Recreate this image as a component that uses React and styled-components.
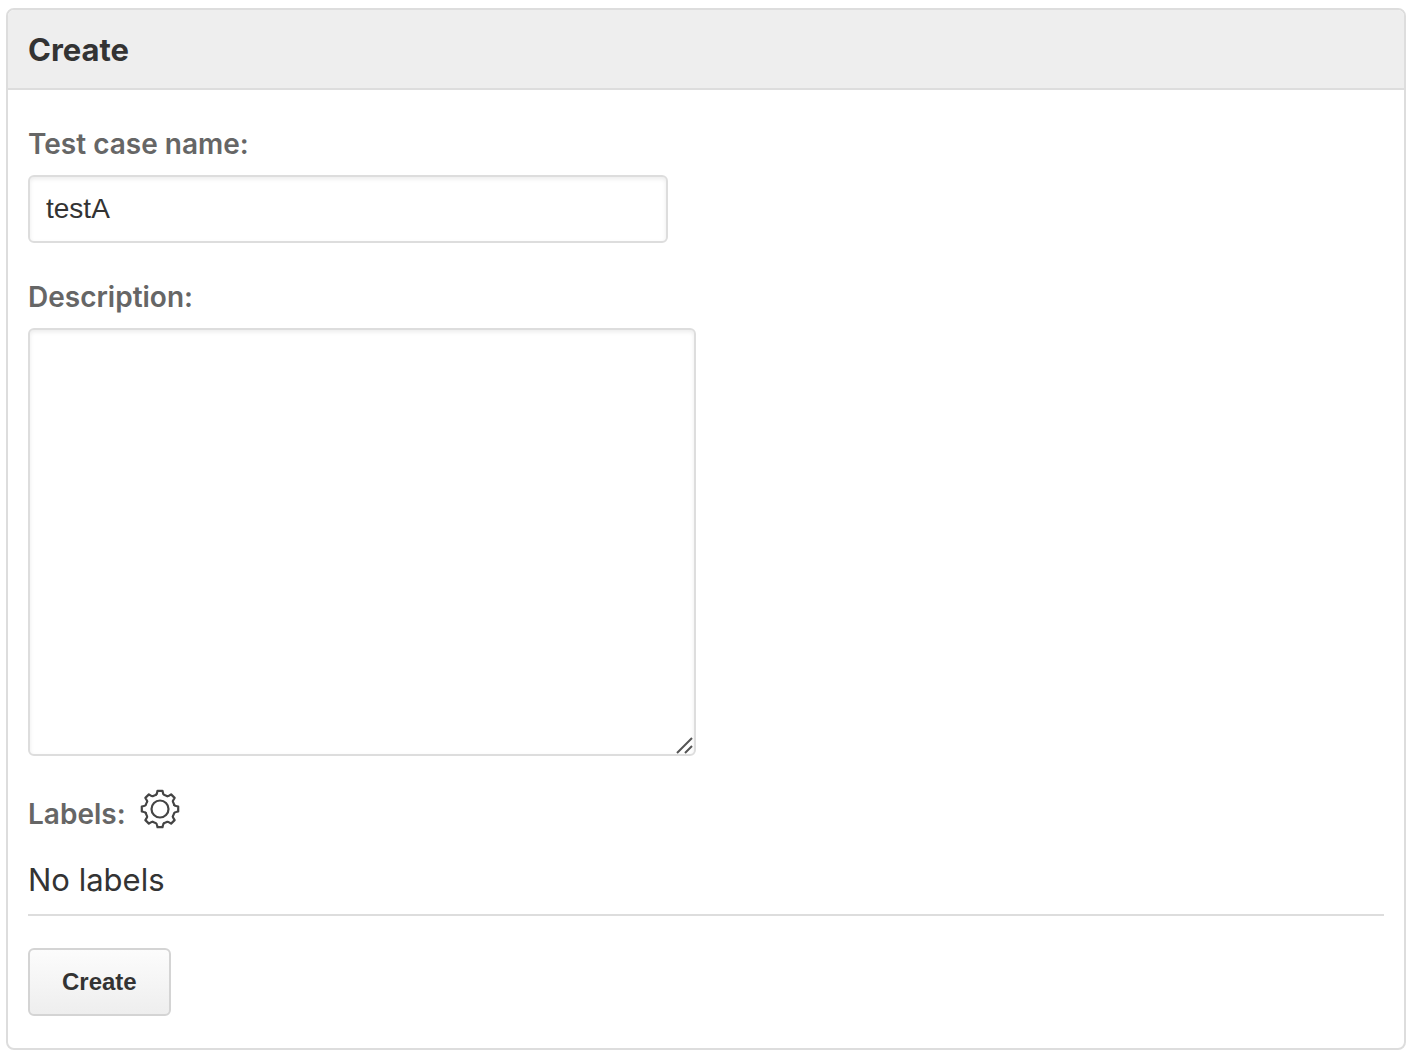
import { useState } from 'react';
import styled, { createGlobalStyle } from 'styled-components';

const GlobalStyle = createGlobalStyle`
  body {
    margin: 0;
    background: #fff;
    color: #333;
    font-family: Inter, 'Liberation Sans', sans-serif;
  }

  *, *::before, *::after {
    box-sizing: border-box;
  }
`;

const Page = styled.main`
  padding: 8px 8px 8px 6px;
`;

const Panel = styled.section`
  border: 2px solid #ddd;
  border-radius: 8px;
  overflow: hidden;
`;

const PanelHeading = styled.header`
  padding: 20px 20px 18px;
  background: #eee;
  border-bottom: 2px solid #ddd;
`;

const PanelTitle = styled.h1`
  margin: 0;
  font-size: 31px;
  font-weight: 700;
  line-height: 40px;
`;

const Form = styled.form`
  padding: 34px 20px 32px;
`;

const Field = styled.div`
  display: flex;
  flex-direction: column;
  align-items: flex-start;
  gap: 11px;
  margin-bottom: 34px;
`;

const Label = styled.label`
  color: #666;
  font-size: 28px;
  font-weight: 600;
  line-height: 40px;
`;

const TextInput = styled.input`
  width: 640px;
  max-width: 100%;
  height: 68px;
  padding: 0 16px;
  border: 2px solid #ddd;
  border-radius: 6px;
  box-shadow: inset 0 2px 4px rgba(0, 0, 0, 0.08);
  background: #fff;
  color: #333;
  font-family: 'Liberation Sans', Arial, sans-serif;
  font-size: 28px;
  outline: none;
`;

const TextAreaWrapper = styled.div`
  position: relative;
  display: flex;
  max-width: 100%;
`;

const TextArea = styled(TextInput)`
  width: 668px;
  height: 428px;
  padding: 12px 16px;
  resize: both;

  &::-webkit-resizer {
    background: transparent;
  }
`;

const ResizeGrip = styled.svg`
  position: absolute;
  right: 2px;
  bottom: 2px;
  pointer-events: none;
`;

const LabelsHeader = styled.div`
  display: flex;
  align-items: center;
  gap: 15px;
`;

const LabelsTitle = styled.span`
  color: #666;
  font-size: 28px;
  font-weight: 600;
  line-height: 40px;
`;

const GearButton = styled.button`
  display: flex;
  padding: 0;
  margin-bottom: 10px;
  border: 0;
  background: none;
  color: #444;
  cursor: pointer;
`;

const LabelList = styled.p`
  margin: 0;
  padding: 22px 0 14px;
  border-bottom: 2px solid #ddd;
  font-size: 31px;
  line-height: 40px;
`;

const SubmitButton = styled.button`
  height: 68px;
  margin-top: 32px;
  padding: 0 32px;
  border: 2px solid #d4d4d4;
  border-radius: 6px;
  background: linear-gradient(#fcfcfc, #eee);
  color: #333;
  font-family: 'Liberation Sans', Arial, sans-serif;
  font-size: 24px;
  font-weight: 700;
  cursor: pointer;
`;

// one tooth pointing up and the notch to its right, repeated every 45 degrees
const TOOTH = 'M-3.9-14.3Q-3.2-14.8-3-16L-2.5-18.2H2.5L3-16Q3.2-14.8 3.9-14.3Q5.8-13.6 7.35-12.87';
const ANGLES = [0, 45, 90, 135, 180, 225, 270, 315];

const GearIcon = () => (
  <svg width="38" height="38" viewBox="-19 -19 38 38" fill="none" stroke="currentColor" strokeWidth="2.2" strokeLinejoin="round" strokeLinecap="round" overflow="visible" aria-hidden="true">
    {ANGLES.map((angle) => (
      <path key={angle} d={TOOTH} transform={`rotate(${angle})`} />
    ))}
    <circle r="8.5" />
  </svg>
);

const App = () => {
  const [name, setName] = useState('testA');
  const [description, setDescription] = useState('');

  return (
    <Page>
      <GlobalStyle />
      <Panel>
        <PanelHeading>
          <PanelTitle>Create</PanelTitle>
        </PanelHeading>
        <Form onSubmit={(e) => e.preventDefault()}>
          <Field>
            <Label htmlFor="name">Test case name:</Label>
            <TextInput
              id="name"
              type="text"
              value={name}
              onChange={(e) => setName(e.target.value)}
            />
          </Field>
          <Field>
            <Label htmlFor="description">Description:</Label>
            <TextAreaWrapper>
              <TextArea
                as="textarea"
                id="description"
                value={description}
                onChange={(e) => setDescription(e.target.value)}
              />
              <ResizeGrip width="18" height="18" stroke="#555" strokeWidth="2" aria-hidden="true">
                <path d="M1 17L16 2M9 17L16 10" />
              </ResizeGrip>
            </TextAreaWrapper>
          </Field>
          <LabelsHeader>
            <LabelsTitle>Labels:</LabelsTitle>
            <GearButton type="button" aria-label="Edit labels">
              <GearIcon />
            </GearButton>
          </LabelsHeader>
          <LabelList>No labels</LabelList>
          <SubmitButton type="submit">Create</SubmitButton>
        </Form>
      </Panel>
    </Page>
  );
};

export default App;
